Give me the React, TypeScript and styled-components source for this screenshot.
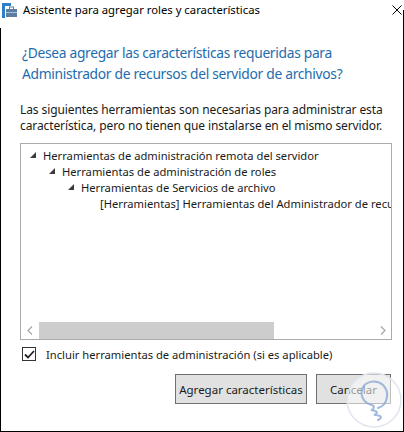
import React from "react";
import styled, { createGlobalStyle } from "styled-components";

const Global = createGlobalStyle`
  html, body { margin: 0; padding: 0; background: #fff; }
  body { font-family: "Noto Sans", "Open Sans", sans-serif; }
`;

const Window = styled.div`
  position: relative;
  width: 404px;
  height: 432px;
  box-sizing: border-box;
  background: #fff;
  display: flex;
  flex-direction: column;
  overflow: hidden;
`;

const TitleBar = styled.div`
  height: 28px;
  flex: none;
  display: flex;
  align-items: flex-start;
  padding: 3px 0 0 2px;
  box-sizing: border-box;
  position: relative;
  &::after {
    content: "";
    position: absolute;
    right: 0;
    top: 10px;
    bottom: 0;
    width: 1px;
    background: #000;
  }
`;

const TitleText = styled.span`
  margin-left: 6px;
  font-size: 11.3px;
  line-height: 14px;
  color: #000;
`;

const CloseBtn = styled.div`
  margin-left: auto;
  margin-right: 2px;
  margin-top: 2px;
  width: 10px;
  height: 10px;
  display: flex;
`;

const Body = styled.div`
  flex: 1;
  display: flex;
  flex-direction: column;
  border-left: 1px solid #000;
  border-right: 1px solid #000;
  border-bottom: 1px solid #000;
  padding: 0 11px 0 19px;
`;

const Heading = styled.h1`
  margin: 14px 0 0 2px;
  font-weight: 400;
  font-size: 13.8px;
  letter-spacing: -0.3px;
  line-height: 21px;
  color: #1e6cae;
  white-space: nowrap;
`;

const Para = styled.p`
  margin: 18px 0 0 0;
  font-size: 12px;
  line-height: 16px;
  color: #1a1a1a;
  white-space: nowrap;
  letter-spacing: -0.1px;
`;

const TreeBox = styled.div`
  margin-top: 9px;
  height: 197px;
  box-sizing: border-box;
  border: 1px solid #ababab;
  display: flex;
  flex-direction: column;
  overflow: hidden;
`;

const TreeList = styled.div`
  flex: 1;
  padding-top: 3px;
  overflow: hidden;
`;

const TreeRow = styled.div<{ $level: number }>`
  display: flex;
  align-items: center;
  height: 16px;
  padding-left: ${(p) => 9 + p.$level * 19}px;
  white-space: nowrap;
  font-size: 11.2px;
  color: #1a1a1a;
`;

const Expander = styled.span`
  width: 13px;
  flex: none;
  display: flex;
  align-items: center;
`;

const HScroll = styled.div`
  height: 17px;
  flex: none;
  display: flex;
  align-items: center;
  background: #fff;
`;

const ArrowCell = styled.div`
  width: 17px;
  height: 17px;
  display: flex;
  align-items: center;
  justify-content: center;
  flex: none;
`;

const Track = styled.div`
  flex: 1;
  height: 17px;
  display: flex;
  align-items: stretch;
`;

const Thumb = styled.div`
  background: #cdcdcd;
  margin-left: 1px;
`;

const CheckRow = styled.label`
  margin-top: 7px;
  height: 14px;
  display: flex;
  align-items: center;
  gap: 10px;
  font-size: 11.2px;
  color: #1a1a1a;
  white-space: nowrap;
`;

const CheckBox = styled.span`
  width: 14px;
  height: 14px;
  box-sizing: border-box;
  border: 1px solid #333;
  display: flex;
  align-items: center;
  justify-content: center;
  margin-left: 2px;
  background: #fff;
  flex: none;
`;

const Buttons = styled.div`
  margin-top: 13px;
  padding-right: 1px;
  display: flex;
  justify-content: flex-end;
  gap: 9px;
`;

const Button = styled.button<{ $w: number }>`
  width: ${(p) => p.$w}px;
  height: 30px;
  box-sizing: border-box;
  background: #e1e1e1;
  border: 1px solid #707070;
  font-family: "Noto Sans", "Open Sans", sans-serif;
  font-size: 11.5px;
  color: #1a1a1a;
  padding: 0;
  white-space: nowrap;
`;

const Watermark = styled.svg`
  position: absolute;
  left: 344px;
  top: 372px;
  pointer-events: none;
`;

const AppIcon = () => (
  <svg width="15" height="15" viewBox="0 0 15 15">
    <rect x="0" y="0" width="3" height="15" fill="#2f7fc8" />
    <rect x="0" y="0" width="9" height="3" fill="#2f7fc8" />
    <rect x="4" y="6" width="11" height="8" fill="#5b7fa3" />
    <rect x="7.5" y="4" width="4" height="2.5" fill="none" stroke="#5b7fa3" strokeWidth="1" />
    <rect x="4" y="9" width="11" height="1" fill="#a9c1d8" />
  </svg>
);

const Tri = () => (
  <svg width="6" height="6" viewBox="0 0 6 6">
    <polygon points="6,0 6,6 0,6" fill="#3c3c3c" />
  </svg>
);

const rows = [
  { level: 0, exp: true, text: "Herramientas de administración remota del servidor" },
  { level: 1, exp: true, text: "Herramientas de administración de roles" },
  { level: 2, exp: true, text: "Herramientas de Servicios de archivo" },
  { level: 3, exp: false, text: "[Herramientas] Herramientas del Administrador de recursos del servidor de archivos" },
];

export default function App() {
  return (
    <>
      <Global />
      <Window>
        <TitleBar>
          <AppIcon />
          <TitleText>Asistente para agregar roles y características</TitleText>
          <CloseBtn>
            <svg width="10" height="10" viewBox="0 0 10 10">
              <path d="M0.5 0.5 L9.5 9.5 M9.5 0.5 L0.5 9.5" stroke="#000" strokeWidth="1" />
            </svg>
          </CloseBtn>
        </TitleBar>
        <Body>
          <Heading>
            ¿Desea agregar las características requeridas para
            <br />
            Administrador de recursos del servidor de archivos?
          </Heading>
          <Para>
            Las siguientes herramientas son necesarias para administrar esta
            <br />
            característica, pero no tienen que instalarse en el mismo servidor.
          </Para>
          <TreeBox>
            <TreeList>
              {rows.map((r, i) => (
                <TreeRow key={i} $level={r.level}>
                  <Expander>{r.exp ? <Tri /> : null}</Expander>
                  <span>{r.text}</span>
                </TreeRow>
              ))}
            </TreeList>
            <HScroll>
              <ArrowCell>
                <svg width="6" height="9" viewBox="0 0 6 9">
                  <path d="M5 0.5 L1 4.5 L5 8.5" fill="none" stroke="#a6a6a6" strokeWidth="1.2" />
                </svg>
              </ArrowCell>
              <Track>
                <Thumb style={{ width: "235px" }} />
              </Track>
              <ArrowCell>
                <svg width="6" height="9" viewBox="0 0 6 9">
                  <path d="M1 0.5 L5 4.5 L1 8.5" fill="none" stroke="#a6a6a6" strokeWidth="1.2" />
                </svg>
              </ArrowCell>
            </HScroll>
          </TreeBox>
          <CheckRow>
            <CheckBox>
              <svg width="11" height="9" viewBox="0 0 11 9">
                <path d="M1 4.5 L4 7.5 L10 1" fill="none" stroke="#222" strokeWidth="1.8" />
              </svg>
            </CheckBox>
            <span>Incluir herramientas de administración (si es aplicable)</span>
          </CheckRow>
          <Buttons>
            <Button $w={132}>Agregar características</Button>
            <Button $w={75}>Cancelar</Button>
          </Buttons>
        </Body>
        <Watermark width="60" height="60" viewBox="0 0 60 60">
          <circle cx="30" cy="28" r="27" fill="rgba(255,255,255,0.55)" stroke="#dfe4ef" strokeWidth="1.5" />
          <path
            d="M34 36 C44 33 46 20 39 13 C32 7 20 9 18 18 C16 26 22 32 28 33 C31 34 30 38 27 38 C32 39 36 40 30 43 C36 43 40 45 34 48"
            fill="none"
            stroke="#8aa9d6"
            strokeWidth="2"
            strokeLinecap="round"
            opacity="0.8"
          />
        </Watermark>
      </Window>
    </>
  );
}
